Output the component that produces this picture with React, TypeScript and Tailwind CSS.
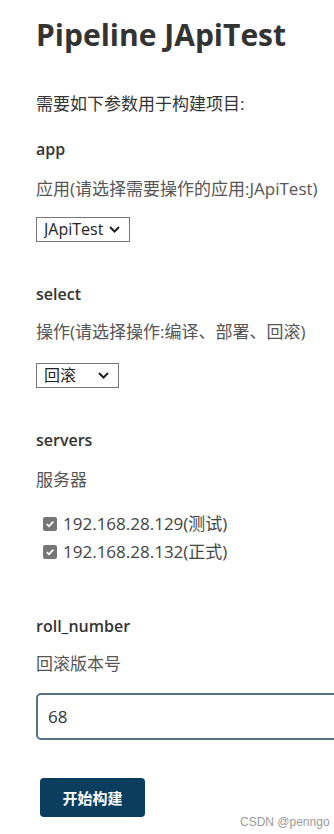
import { useState } from 'react'

const font = { fontFamily: '"Open Sans", "Noto Sans CJK SC", sans-serif' }

export default function App() {
  const [app, setApp] = useState('JApiTest')
  const [action, setAction] = useState('回滚')
  const [servers, setServers] = useState([true, true])
  const [roll, setRoll] = useState('68')

  const toggle = (i: number) => {
    setServers((prev) => prev.map((v, j) => (j === i ? !v : v)))
  }

  return (
    <div
      className="relative min-h-[834px] w-full overflow-hidden bg-white pl-[36px] text-[17px] leading-6 text-[#333]"
      style={font}
    >
      <h1 className="pt-[17px] text-[30px] leading-[36px] font-bold text-[#333]">
        Pipeline JApiTest
      </h1>
      <p className="mt-[39px]">需要如下参数用于构建项目:</p>

      <Label text="app" className="mt-[21px]" />
      <Desc text="应用(请选择需要操作的应用:JApiTest)" className="mt-[16px]" />
      <div className="mt-[16px]">
        <SelectBox
          value={app}
          onChange={setApp}
          options={['JApiTest']}
          width="w-[94px]"
        />
      </div>

      <Label text="select" className="mt-[40px]" />
      <Desc text="操作(请选择操作:编译、部署、回滚)" className="mt-[14px]" />
      <div className="mt-[19px]">
        <SelectBox
          value={action}
          onChange={setAction}
          options={['编译', '部署', '回滚']}
          width="w-[83px]"
        />
      </div>

      <Label text="servers" className="mt-[40px]" />
      <Desc text="服务器" className="mt-[16px]" />
      <div className="mt-[20px] flex flex-col gap-1 pl-[7px]">
        {['192.168.28.129(测试)', '192.168.28.132(正式)'].map((s, i) => (
          <label
            key={s}
            className="flex cursor-pointer items-center gap-[6px] text-[#444]"
            onClick={() => toggle(i)}
          >
            <span
              className={`flex h-[14px] w-[14px] items-center justify-center rounded-[2px] ${servers[i] ? 'bg-[#767676]' : 'border border-[#767676] bg-white'}`}
            >
              {servers[i] && (
                <svg width="10" height="10" viewBox="0 0 10 10">
                  <path
                    d="M1.8 5.2 L4 7.3 L8.3 2.6"
                    fill="none"
                    stroke="white"
                    strokeWidth="1.8"
                  />
                </svg>
              )}
            </span>
            {s}
          </label>
        ))}
      </div>

      <Label text="roll_number" className="mt-[50px]" />
      <Desc text="回滚版本号" className="mt-[14px]" />
      <input
        value={roll}
        onChange={(e) => setRoll(e.target.value)}
        className="mt-[17px] block h-[47px] w-[330px] rounded-[5px] border-2 border-[#587284] px-[10px] text-[17px] text-[#333] outline-none"
        style={font}
      />

      <button className="mt-[38px] ml-[4px] h-[39px] w-[105px] rounded-[4px] bg-[#0b3d5e] text-[15px] font-bold text-white">
        开始构建
      </button>

      <span
        className="absolute top-[810px] left-[240px] text-[12px] text-[#9a9a9a]"
        style={{ fontFamily: '"Liberation Sans", sans-serif' }}
      >
        CSDN @penngo
      </span>
    </div>
  )
}

function Label({ text, className }: { text: string; className?: string }) {
  return (
    <p className={`text-[16px] font-semibold text-[#333] ${className}`}>
      {text}
    </p>
  )
}

function Desc({ text, className }: { text: string; className?: string }) {
  return <p className={`text-[#555] ${className}`}>{text}</p>
}

function SelectBox({
  value,
  onChange,
  options,
  width,
}: {
  value: string
  onChange: (v: string) => void
  options: string[]
  width: string
}) {
  return (
    <div className={`relative h-[25px] ${width}`}>
      <select
        value={value}
        onChange={(e) => onChange(e.target.value)}
        className="h-full w-full appearance-none rounded-none border border-[#767676] bg-white pl-[7px] text-[16px] leading-[23px] text-[#222] outline-none"
        style={font}
      >
        {options.map((o) => (
          <option key={o}>{o}</option>
        ))}
      </select>
      <svg
        className="pointer-events-none absolute top-[9px] right-[10px]"
        width="11"
        height="7"
        viewBox="0 0 11 7"
      >
        <path d="M1 1 L5.5 5.5 L10 1" fill="none" stroke="#222" strokeWidth="2" />
      </svg>
    </div>
  )
}
